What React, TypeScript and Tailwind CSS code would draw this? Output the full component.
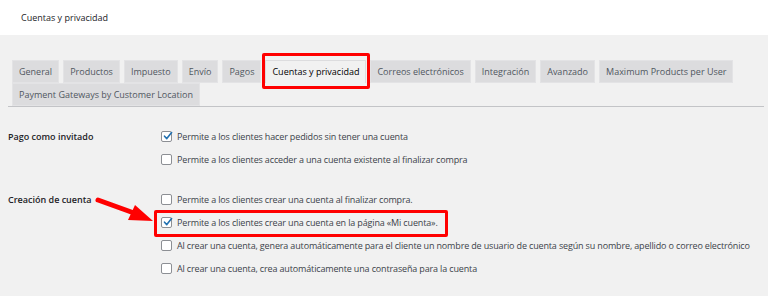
import React from "react";

const tabs = [
  "General",
  "Productos",
  "Impuesto",
  "Envío",
  "Pagos",
  "Cuentas y privacidad",
  "Correos electrónicos",
  "Integración",
  "Avanzado",
  "Maximum Products per User",
  "Payment Gateways by Customer Location",
];

function Checkbox({ checked }: { checked?: boolean }) {
  return (
    <span className="relative inline-flex h-[11px] w-[11px] shrink-0 items-center justify-center rounded-[2px] border border-[#8c8f94] bg-white">
      {checked && (
        <svg width="10" height="10" viewBox="0 0 10 10" className="absolute left-[1px] top-[-1px]">
          <path d="M1.5 5.2 L3.8 7.6 L8.6 1.6" fill="none" stroke="#2271b1" strokeWidth="1.6" strokeLinecap="round" strokeLinejoin="round" />
        </svg>
      )}
    </span>
  );
}

function Option({ checked, text, highlight }: { checked?: boolean; text: string; highlight?: boolean }) {
  return (
    <div className="relative flex h-[23px] items-center gap-[5px]">
      <Checkbox checked={checked} />
      <span className="text-[9px] tracking-[-0.15px] text-[#3c434a] whitespace-nowrap">{text}</span>
      {highlight && (
        <div className="pointer-events-none absolute left-[-7px] top-[-1px] h-[27px] w-[294px] rounded-[2px] border-[3px] border-[#ff0000]" />
      )}
    </div>
  );
}

export default function App() {
  return (
    <div
      className="relative h-[296px] w-[768px] overflow-hidden bg-[#f1f1f1]"
      style={{ fontFamily: '"Open Sans", "Noto Sans", sans-serif' }}
    >
      <div className="flex h-[35px] items-center bg-white pl-[21px] text-[9px] text-[#1d2327]">
        Cuentas y privacidad
      </div>

      <div className="mx-[8px] mt-[25px] flex w-[756px] flex-wrap border-b border-[#c3c4c7]">
        {tabs.map((t) => {
          const active = t === "Cuentas y privacidad";
          return (
            <div
              key={t}
              className={
                "relative ml-[4px] flex h-[23px] items-center px-[6px] text-[9px] whitespace-nowrap " +
                (active
                  ? "bg-[#f1f1f1] text-[#000] border border-b-0 border-[#dcdcde]"
                  : "bg-[#dcdcde] text-[#50575e] border border-[#e3e3e5]")
              }
            >
              {t}
              {active && (
                <div className="pointer-events-none absolute -left-[4px] -right-[5px] top-[-8px] h-[36px] rounded-[2px] border-[3px] border-[#ff0000]" />
              )}
            </div>
          );
        })}
      </div>

      <div className="mt-[18px] flex px-[8px]">
        <div className="w-[153px] shrink-0 pt-[5px] text-[9px] font-semibold text-[#1d2327]">Pago como invitado</div>
        <div className="flex flex-col">
          <Option checked text="Permite a los clientes hacer pedidos sin tener una cuenta" />
          <Option text="Permite a los clientes acceder a una cuenta existente al finalizar compra" />
        </div>
      </div>

      <div className="mt-[17px] flex px-[8px]">
        <div className="w-[153px] shrink-0 pt-[5px] text-[9px] font-semibold text-[#1d2327]">Creación de cuenta</div>
        <div className="flex flex-col">
          <Option text="Permite a los clientes crear una cuenta al finalizar compra." />
          <Option checked highlight text="Permite a los clientes crear una cuenta en la página «Mi cuenta»." />
          <Option text="Al crear una cuenta, genera automáticamente para el cliente un nombre de usuario de cuenta según su nombre, apellido o correo electrónico" />
          <Option text="Al crear una cuenta, crea automáticamente una contraseña para la cuenta" />
        </div>
      </div>

      <svg className="pointer-events-none absolute left-0 top-0" width="768" height="296">
        <line x1="98" y1="200" x2="134" y2="213" stroke="#ff0000" strokeWidth="5" strokeLinecap="round" />
        <polygon points="153,221 128,220 135,205" fill="#ff0000" />
      </svg>
    </div>
  );
}
